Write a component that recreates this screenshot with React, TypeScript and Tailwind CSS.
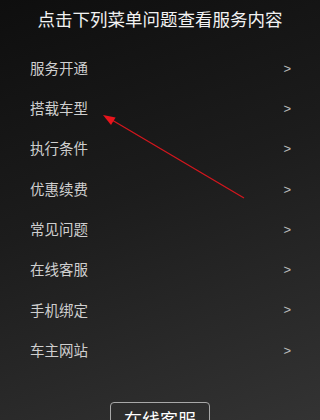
import React from "react";

const items = ["服务开通", "搭载车型", "执行条件", "优惠续费", "常见问题", "在线客服", "手机绑定", "车主网站"];

export default function App() {
  return (
    <div
      className="relative w-[320px] h-[420px] overflow-hidden bg-[linear-gradient(160deg,#0e0e0e_0%,#1c1c1c_45%,#333333_100%)]"
      style={{ fontFamily: '"Noto Sans CJK SC", "Liberation Sans", sans-serif' }}
    >
      <div className="pt-[8px] h-[30px] text-center text-[17.5px] leading-[22px] text-[#f2f2f2]">
        点击下列菜单问题查看服务内容
      </div>
      <div className="mt-[18px] flex flex-col">
        {items.map((t) => (
          <div key={t} className="h-[40.3px] flex items-center justify-between pl-[30px] pr-[29px]">
            <span className="text-[14.5px] text-[#cfcfcf] leading-none">{t}</span>
            <span className="text-[13px] text-[#bdbdbd] leading-none" style={{ fontFamily: '"Liberation Sans", sans-serif' }}>&gt;</span>
          </div>
        ))}
      </div>
      <div className="mt-[32px] flex justify-center">
        <div className="w-[100px] h-[38px] border-[1.5px] border-[#a8a8a8] rounded-[4px] flex items-start justify-center pt-[3px] text-[18px] leading-[26px] text-white">
          在线客服
        </div>
      </div>
      <svg className="absolute left-0 top-0" width="320" height="420" viewBox="0 0 320 420">
        <line x1="244" y1="198" x2="112" y2="120" stroke="#d3161d" strokeWidth="1.3" />
        <polygon points="103,115 115.6,117.5 111,125" fill="#e8141c" />
      </svg>
    </div>
  );
}
